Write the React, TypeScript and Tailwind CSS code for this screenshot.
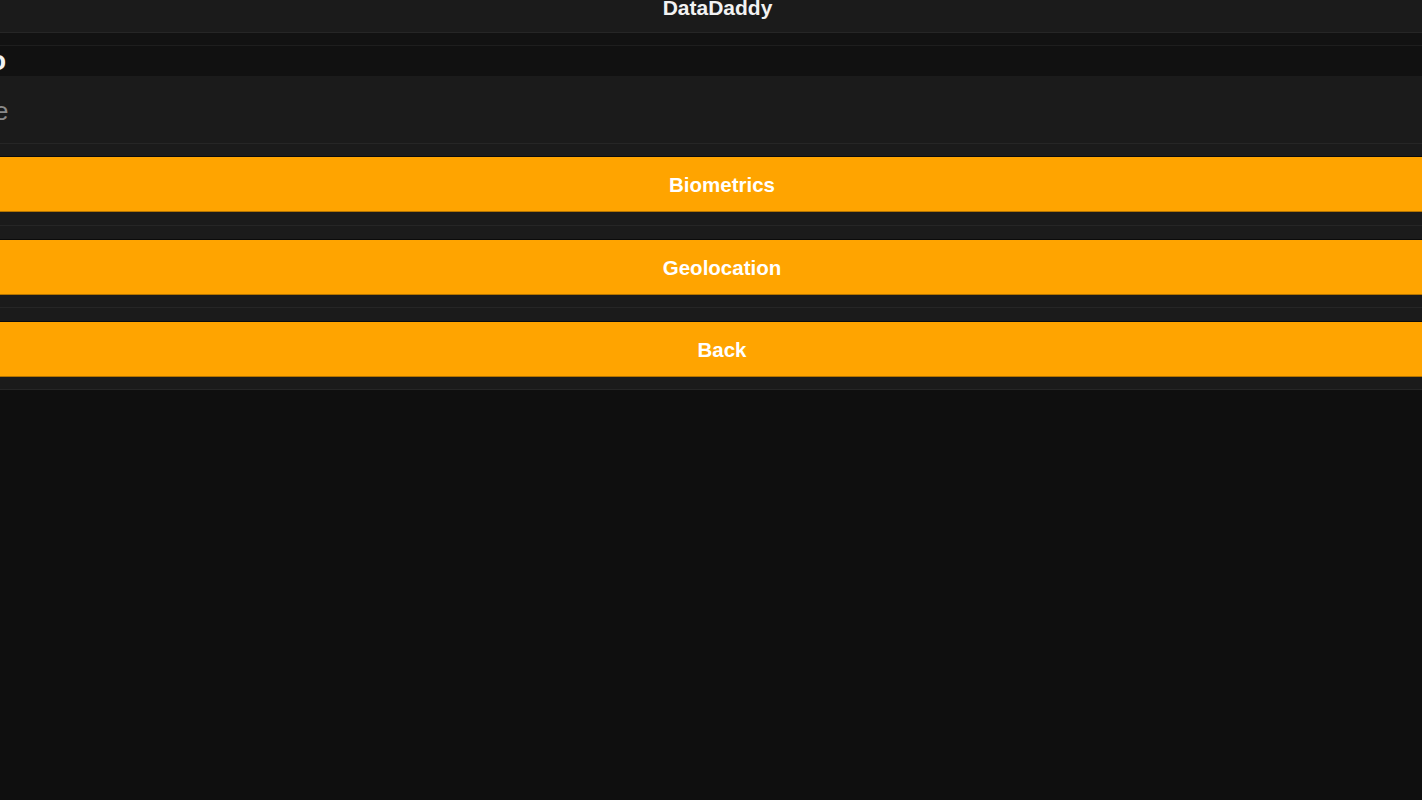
import React from "react";

const font = { fontFamily: '"Liberation Sans", Arial, Helvetica, sans-serif' };

function OrangeButton({ label }: { label: string }) {
  return (
    <div className="flex flex-col">
      <div className="h-px bg-[#0b0b0b]" />
      <button
        className="h-[54px] w-full bg-[#ffa400] text-white text-[20.5px] font-bold flex items-center justify-center pl-[22px] pt-[2px]"
        style={font}
      >
        {label}
      </button>
      <div className="h-px bg-[#b47400]" />
    </div>
  );
}

function Gap({ second }: { second?: boolean }) {
  return (
    <div className="flex flex-col">
      <div className={second ? "h-[12px] bg-[#1b1b1b]" : "h-[13px] bg-[#1b1b1b]"} />
      <div className="h-px bg-[#262626]" />
      <div className="h-[13px] bg-[#1b1b1b]" />
    </div>
  );
}

export default function App() {
  return (
    <div className="w-[1422px] h-[800px] bg-[#0f0f0f] overflow-hidden flex flex-col" style={font}>
      <header className="h-[32px] bg-[#1b1b1b] flex justify-center pl-[13px] overflow-hidden">
        <span className="text-[21px] font-bold leading-[16px] text-[#f2f2f2]">DataDaddy</span>
      </header>
      <div className="h-px bg-[#262626]" />
      <div className="h-[12px] bg-[#121212]" />
      <div className="h-px bg-[#1e1e1e]" />
      <div className="h-[30px] bg-[#111111] flex items-center overflow-hidden">
        <span className="text-[28px] leading-[30px] font-bold text-[#f2f2f2] ml-[-11px]">o</span>
      </div>
      <div className="h-[67px] bg-[#1b1b1b] flex items-center overflow-hidden">
        <span className="text-[26px] leading-[30px] text-[#8a8a8a] ml-[-6px] pt-[2px]">e</span>
      </div>
      <div className="h-px bg-[#262626]" />
      <div className="h-[12px] bg-[#1b1b1b]" />
      <OrangeButton label="Biometrics" />
      <Gap />
      <OrangeButton label="Geolocation" />
      <Gap second />
      <OrangeButton label="Back" />
      <div className="h-[12px] bg-[#1b1b1b]" />
      <div className="h-px bg-[#262626]" />
      <div className="flex-1 bg-[#0f0f0f]" />
    </div>
  );
}
